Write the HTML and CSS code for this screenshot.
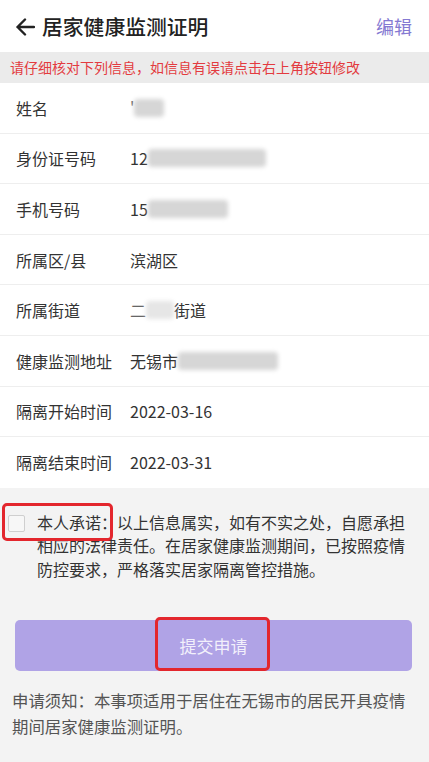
FILE: index.html
```html
<!DOCTYPE html>
<html lang="zh-CN">
<head>
    <meta charset="UTF-8">
    <meta name="viewport" content="width=device-width, initial-scale=1.0">
    <title>居家健康监测证明</title>
    <link rel="stylesheet" href="styles.css">
</head>
<body>
    <div class="header">
        <div class="header-left">
            <svg class="back" width="20" height="18" viewBox="0 0 20 18">
                <path d="M10 1.5 L2.5 9 L10 16.5 M2.5 9 L19 9" fill="none" stroke="#222" stroke-width="2.4" stroke-linecap="round" stroke-linejoin="round"/>
            </svg>
            <h1>居家健康监测证明</h1>
        </div>
        <span class="edit">编辑</span>
    </div>
    <div class="tip">请仔细核对下列信息，如信息有误请点击右上角按钮修改</div>
    <div class="info">
        <div class="row"><span class="label">姓名</span><span class="value"><span class="part">'</span><span class="blur" style="width:30px"></span></span></div>
        <div class="row"><span class="label">身份证号码</span><span class="value">12<span class="blur" style="width:118px"></span></span></div>
        <div class="row"><span class="label">手机号码</span><span class="value">15<span class="blur" style="width:80px"></span></span></div>
        <div class="row"><span class="label">所属区/县</span><span class="value">滨湖区</span></div>
        <div class="row"><span class="label">所属街道</span><span class="value"><span class="part">二</span><span class="blur soft" style="width:28px"></span>街道</span></div>
        <div class="row"><span class="label">健康监测地址</span><span class="value">无锡市<span class="blur" style="width:100px"></span></span></div>
        <div class="row"><span class="label">隔离开始时间</span><span class="value">2022-03-16</span></div>
        <div class="row"><span class="label">隔离结束时间</span><span class="value">2022-03-31</span></div>
    </div>
    <div class="bottom">
        <div class="promise">
            <span class="checkbox"></span>
            <p>本人承诺：以上信息属实，如有不实之处，自愿承担相应的法律责任。在居家健康监测期间，已按照疫情防控要求，严格落实居家隔离管控措施。</p>
            <span class="mark mark-check"></span>
        </div>
        <div class="btn-wrap">
            <button class="submit">提交申请</button>
            <span class="mark mark-btn"></span>
        </div>
        <p class="notice">申请须知：本事项适用于居住在无锡市的居民开具疫情期间居家健康监测证明。</p>
    </div>
</body>
</html>
```

FILE: styles.css
```css
body {
    margin: 0;
    font-family: "Noto Sans CJK SC", "Noto Sans", sans-serif;
    background-color: #f3f3f3;
    color: #333;
    width: 429px;
    height: 762px;
    overflow: hidden;
}
.header {
    background: white;
    height: 52px;
    display: flex;
    align-items: center;
    justify-content: space-between;
    padding: 0 17px 0 15px;
}
.header-left {
    display: flex;
    align-items: center;
    gap: 7px;
}
.back {
    margin-top: 1px;
}
h1 {
    margin: 0;
    font-size: 20.8px;
    font-weight: 500;
    color: #222;
}
.edit {
    font-size: 18px;
    color: #8579d2;
}
.tip {
    background-color: #ebebeb;
    height: 31px;
    line-height: 31px;
    padding-left: 10px;
    font-size: 14px;
    color: #e33b3f;
}
.info {
    background: white;
}
.row {
    display: flex;
    align-items: center;
    height: 50.6px;
    box-sizing: border-box;
    border-bottom: 1px solid #eeeeee;
    font-size: 16px;
    color: #333;
}
.row:last-child {
    border-bottom: none;
}
.label {
    width: 114px;
    padding-left: 16px;
}
.value {
    display: flex;
    align-items: center;
}
.part {
    color: #666;
}
.blur {
    display: inline-block;
    height: 18px;
    background: #d6d6d6;
    border-radius: 4px;
    filter: blur(2px);
}
.blur.soft {
    background: #e6e6e6;
}
.bottom {
    padding-top: 23px;
}
.promise {
    position: relative;
    display: flex;
    align-items: flex-start;
    padding: 0 14px 0 8px;
}
.checkbox {
    flex: none;
    width: 15px;
    height: 15px;
    margin-top: 4px;
    margin-right: 12px;
    border: 1px solid #cfcfcf;
    border-radius: 2px;
    background: #f7f7f7;
}
.promise p {
    margin: 0;
    width: 377px;
    font-size: 16px;
    line-height: 23.5px;
    color: #333;
}
.mark {
    position: absolute;
    border: 3.5px solid #e3262d;
    border-radius: 5px;
}
.mark-check {
    left: 2px;
    top: -8px;
    width: 105px;
    height: 32px;
}
.btn-wrap {
    position: relative;
    margin: 39px 17px 0 15px;
}
.submit {
    display: block;
    width: 100%;
    height: 51px;
    border: none;
    border-radius: 5px;
    background-color: #b0a3e6;
    color: rgba(255, 255, 255, 0.85);
    font-family: inherit;
    font-size: 17px;
}
.mark-btn {
    left: 140px;
    top: -3px;
    width: 109px;
    height: 48px;
}
.notice {
    margin: 16px 0 0;
    width: 395px;
    padding-left: 12px;
    font-size: 16.4px;
    line-height: 26px;
    color: #555;
}
```
